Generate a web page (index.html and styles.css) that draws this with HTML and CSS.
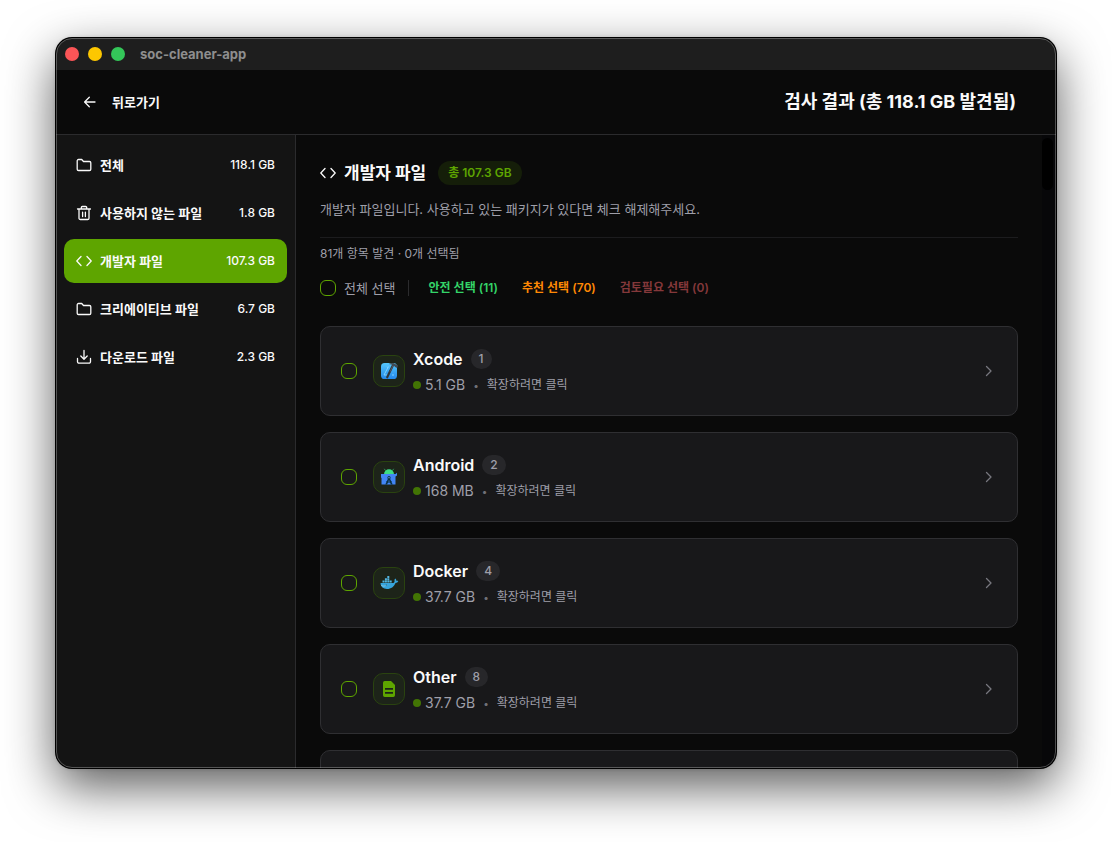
FILE: index.html
```html
<!DOCTYPE html>
<html lang="ko">
<head>
    <meta charset="UTF-8">
    <meta name="viewport" content="width=device-width, initial-scale=1.0">
    <title>soc-cleaner-app</title>
    <link rel="stylesheet" href="styles.css">
</head>
<body>

    <!-- Shared icons -->
    <svg class="sprite" aria-hidden="true">
        <symbol id="i-folder" viewBox="0 0 16 16">
            <path d="M1.2 3.8a1.3 1.3 0 0 1 1.3-1.3h3.2l1.8 2h6a1.3 1.3 0 0 1 1.3 1.3v6.4a1.3 1.3 0 0 1-1.3 1.3h-11a1.3 1.3 0 0 1-1.3-1.3z"/>
        </symbol>
        <symbol id="i-trash" viewBox="0 0 16 16">
            <path d="M1.5 4h13M3 4v9.2A1.3 1.3 0 0 0 4.3 14.5h7.4A1.3 1.3 0 0 0 13 13.2V4M5.3 4V2.6A1.1 1.1 0 0 1 6.4 1.5h3.2a1.1 1.1 0 0 1 1.1 1.1V4M6.6 7.2v4.3M9.4 7.2v4.3"/>
        </symbol>
        <symbol id="i-code" viewBox="0 0 16 16">
            <path d="M5 3.5L.8 8 5 12.5M11 3.5L15.2 8 11 12.5"/>
        </symbol>
        <symbol id="i-download" viewBox="0 0 16 16">
            <path d="M8 1.5V10M4.8 7L8 10.2 11.2 7M1.5 9.5v3.2A1.5 1.5 0 0 0 3 14.2h10a1.5 1.5 0 0 0 1.5-1.5V9.5"/>
        </symbol>
        <symbol id="i-chevron" viewBox="0 0 16 16">
            <path d="M5.5 3.5L10 8l-4.500 4.500"/>
        </symbol>
    </svg>

    <div class="window">
        <div class="titlebar">
            <span class="light red"></span>
            <span class="light yellow"></span>
            <span class="light green"></span>
            <span class="app-name">soc-cleaner-app</span>
        </div>

        <header class="header">
            <button class="back" type="button">
                <svg class="icon" viewBox="0 0 16 16"><path d="M13 8H2.8M7.3 3.3L2.6 8l4.7 4.7"/></svg>
                뒤로가기
            </button>
            <h1>검사 결과 (총 118.1 GB 발견됨)</h1>
        </header>

        <div class="body">
            <nav class="sidebar">
                <a class="nav-item" href="#all">
                    <svg class="icon"><use href="#i-folder"/></svg>
                    <span class="nav-label">전체</span>
                    <span class="nav-size">118.1 GB</span>
                </a>
                <a class="nav-item" href="#unused">
                    <svg class="icon"><use href="#i-trash"/></svg>
                    <span class="nav-label">사용하지 않는 파일</span>
                    <span class="nav-size">1.8 GB</span>
                </a>
                <a class="nav-item active" href="#developer">
                    <svg class="icon"><use href="#i-code"/></svg>
                    <span class="nav-label">개발자 파일</span>
                    <span class="nav-size">107.3 GB</span>
                </a>
                <a class="nav-item" href="#creative">
                    <svg class="icon"><use href="#i-folder"/></svg>
                    <span class="nav-label">크리에이티브 파일</span>
                    <span class="nav-size">6.7 GB</span>
                </a>
                <a class="nav-item" href="#downloads">
                    <svg class="icon"><use href="#i-download"/></svg>
                    <span class="nav-label">다운로드 파일</span>
                    <span class="nav-size">2.3 GB</span>
                </a>
            </nav>

            <main class="content">
                <div class="section-title">
                    <svg class="icon"><use href="#i-code"/></svg>
                    <h2>개발자 파일</h2>
                    <span class="total">총 107.3 GB</span>
                </div>
                <p class="description">개발자 파일입니다. 사용하고 있는 패키지가 있다면 체크 해제해주세요.</p>

                <div class="toolbar">
                    <p class="stats">81개 항목 발견 · 0개 선택됨</p>
                    <div class="filters">
                        <input class="check" type="checkbox" id="all">
                        <label for="all">전체 선택</label>
                        <span class="separator"></span>
                        <button class="filter safe" type="button">안전 선택 (11)</button>
                        <button class="filter recommended" type="button">추천 선택 (70)</button>
                        <button class="filter review" type="button" disabled>검토필요 선택 (0)</button>
                    </div>
                </div>

                <div class="cards">
                    <section class="card">
                        <input class="check" type="checkbox" id="xcode">
                        <div class="tile">
                            <svg viewBox="0 0 20 20">
                                <defs>
                                    <linearGradient id="sky" x1="0" y1="0" x2="0" y2="1">
                                        <stop offset="0" stop-color="#55c8fb"/>
                                        <stop offset="1" stop-color="#2487ea"/>
                                    </linearGradient>
                                </defs>
                                <rect x="2" y="2" width="16" height="16" rx="3.6" fill="url(#sky)"/>
                                <path d="M5 14L9.5 5.5M5 14h5M13 14h2M8 5.5l1 1.5" stroke="#7dd2ff" stroke-width="1" fill="none"/>
                                <path d="M14.3 3.6L8.2 16.3" stroke="#30363d" stroke-width="2.2" stroke-linecap="round"/>
                                <path d="M14.3 4L11 10.8" stroke="#6d767e" stroke-width=".6"/>
                                <path d="M9.7 2.9c2-1.5 4.7-1.3 6.8.3l2.6 1.3-1 2.4-2-1-1.3-1.4-2.6-1z" fill="#414a52"/>
                            </svg>
                        </div>
                        <div class="info">
                            <div class="name"><label for="xcode">Xcode</label><span class="count">1</span></div>
                            <div class="meta"><span class="dot"></span><span class="size">5.1 GB</span><span class="bullet">•</span><span class="hint">확장하려면 클릭</span></div>
                        </div>
                        <svg class="icon chevron"><use href="#i-chevron"/></svg>
                    </section>

                    <section class="card">
                        <input class="check" type="checkbox" id="android">
                        <div class="tile">
                            <svg viewBox="0 0 20 20">
                                <path d="M5 7.3a5 5 0 0 1 10 0z" fill="#3ddc84"/>
                                <path d="M6.5 3.6L5.3 1.8M13.5 3.6l1.2-1.8" stroke="#3ddc84" stroke-width=".6"/>
                                <path d="M2 7h14.5L18 5.8v2.6l-1.5 1.1v8h-14V11L2 10.5z" fill="#4285f4"/>
                                <path d="M10 9.5L6.3 17.5h1.8L10 13l1.9 4.5h1.8z" fill="#073042"/>
                                <circle cx="10" cy="10.7" r="1.6" fill="#073042"/>
                                <circle cx="10" cy="10.7" r=".6" fill="#9bbcff"/>
                                <path d="M7.5 14.5q2.5 1.4 5 0" stroke="#073042" fill="none"/>
                            </svg>
                        </div>
                        <div class="info">
                            <div class="name"><label for="android">Android</label><span class="count">2</span></div>
                            <div class="meta"><span class="dot"></span><span class="size">168 MB</span><span class="bullet">•</span><span class="hint">확장하려면 클릭</span></div>
                        </div>
                        <svg class="icon chevron"><use href="#i-chevron"/></svg>
                    </section>

                    <section class="card">
                        <input class="check" type="checkbox" id="docker">
                        <div class="tile">
                            <svg viewBox="0 0 20 20">
                                <path d="M1.5 10h12.7c1-.2 1.5-1 1.3-2.4-.1-.9.3-1.5.9-2 .7.6 1 1.3.9 2.1.8-.1 1.5 0 2 .3-.4 1.3-1.4 1.9-2.8 1.9-1.5 3.8-4.4 6-8.5 6-3.800 0-6.200-1.900-6.500-5.900z" fill="#37a4db"/>
                                <path d="M3.5 7.5h2v2h-2zM5.9 7.5h2v2h-2zM8.3 7.5h2v2h-2zM10.7 7.5h2v2h-2zM5.9 5.2h2v2h-2zM8.3 5.2h2v2h-2zM8.3 2.9h2v2h-2z" fill="#52b5df"/>
                                <path d="M2 12.5q3 1.5 6-.3" stroke="#a5d8ed" stroke-width=".6" fill="none"/>
                                <circle cx="7.3" cy="12" r=".6" fill="#153b4c"/>
                            </svg>
                        </div>
                        <div class="info">
                            <div class="name"><label for="docker">Docker</label><span class="count">4</span></div>
                            <div class="meta"><span class="dot"></span><span class="size">37.7 GB</span><span class="bullet">•</span><span class="hint">확장하려면 클릭</span></div>
                        </div>
                        <svg class="icon chevron"><use href="#i-chevron"/></svg>
                    </section>

                    <section class="card">
                        <input class="check" type="checkbox" id="other">
                        <div class="tile">
                            <svg viewBox="0 0 20 20">
                                <path fill-rule="evenodd" d="M5.7 2H12l4 4v10.3a1.7 1.7 0 0 1-1.7 1.7H5.7A1.7 1.7 0 0 1 4 16.3V3.7A1.7 1.7 0 0 1 5.7 2zM6 9v1.7h8V9zM6 13v1.7h8V13z" fill="#5ea500"/>
                            </svg>
                        </div>
                        <div class="info">
                            <div class="name"><label for="other">Other</label><span class="count">8</span></div>
                            <div class="meta"><span class="dot"></span><span class="size">37.7 GB</span><span class="bullet">•</span><span class="hint">확장하려면 클릭</span></div>
                        </div>
                        <svg class="icon chevron"><use href="#i-chevron"/></svg>
                    </section>

                    <section class="card"></section>
                </div>
            </main>

            <div class="scrollbar"><div class="thumb"></div></div>
        </div>
    </div>

</body>
</html>
```
FILE: styles.css
```css
* {
    box-sizing: border-box;
}

body {
    margin: 0;
    padding: 38px 56px 74px;
    height: 100vh;
    background: #ffffff;
    color: #fafafa;
    font-family: Inter, "Noto Sans CJK KR", sans-serif;
    font-size: 13px;
    line-height: 20px;
}

h1, h2, p {
    margin: 0;
}

button {
    border: 0;
    padding: 0;
    background: none;
    color: inherit;
    font: inherit;
    cursor: pointer;
}

.sprite {
    display: none;
}

.icon {
    flex: none;
    width: 16px;
    height: 16px;
    fill: none;
    stroke: currentColor;
    stroke-width: 1.3;
    stroke-linecap: round;
    stroke-linejoin: round;
}

/* WINDOW */
.window {
    position: relative;
    display: flex;
    flex-direction: column;
    height: 100%;
    border-radius: 16px;
    background: #0a0a0a;
    overflow: hidden;
    box-shadow: 0 0 0 1px #000000, 0 0 4px rgba(0, 0, 0, 0.2), 0 18px 50px rgba(0, 0, 0, 0.66);
}

/* thin light edge over the content */
.window::after {
    content: "";
    position: absolute;
    inset: 0;
    border: 1px solid rgba(255, 255, 255, 0.28);
    border-radius: 16px;
    pointer-events: none;
}

.titlebar {
    flex: none;
    display: flex;
    align-items: center;
    gap: 9px;
    height: 32px;
    padding: 0 9px;
    background: #1e1e1e;
}

.light {
    width: 14px;
    height: 14px;
    border-radius: 50%;
}

.red { background: #fb5557; }
.yellow { background: #fdc700; }
.green { background: #34c759; }

.app-name {
    margin-left: 6px;
    color: #8e8e8e;
    font-weight: 700;
}

/* HEADER */
.header {
    flex: none;
    display: flex;
    align-items: center;
    justify-content: space-between;
    height: 65px;
    padding: 0 40px 0 26px;
    border-bottom: 1px solid #2b2b2d;
}

.header h1 {
    font-size: 18px;
    font-weight: 700;
    line-height: 28px;
}

.back {
    display: flex;
    align-items: center;
    gap: 14px;
    font-weight: 600;
}

.body {
    flex: 1;
    display: flex;
    min-height: 0;
}

/* SIDEBAR */
.sidebar {
    flex: none;
    display: flex;
    flex-direction: column;
    gap: 4px;
    width: 240px;
    padding: 8px;
    border-right: 1px solid #2b2b2d;
    background: #141414;
}

.nav-item {
    display: flex;
    align-items: center;
    gap: 8px;
    height: 44px;
    padding: 0 12px;
    border-radius: 10px;
    color: #fafafa;
    font-weight: 600;
    text-decoration: none;
}

.nav-item.active {
    background: #5ea500;
}

.nav-label {
    flex: 1;
}

.nav-size {
    font-size: 12px;
    font-weight: 500;
}

/* CONTENT */
.content {
    flex: 1;
    min-width: 0;
    padding: 24px;
    overflow: hidden;
}

.section-title {
    display: flex;
    align-items: center;
    gap: 8px;
}

.section-title h2 {
    font-size: 17px;
    font-weight: 700;
    line-height: 28px;
}

.total {
    margin-left: 4px;
    padding: 0 10px;
    border-radius: 12px;
    background: #151e09;
    color: #5ea500;
    font-size: 12px;
    font-weight: 600;
    line-height: 24px;
}

.description {
    margin-top: 12px;
    padding-bottom: 18px;
    border-bottom: 1px solid #1c1c1e;
    color: #9f9fa9;
}

.toolbar {
    padding: 8px 0 28px;
    color: #9f9fa9;
}

.stats {
    font-size: 12px;
    line-height: 16px;
}

.filters {
    display: flex;
    align-items: center;
    margin-top: 16px;
}

.filters label {
    margin: 0 12px 0 8px;
}

.check {
    flex: none;
    appearance: none;
    width: 16px;
    height: 16px;
    margin: 0;
    border: 1px solid #5ea500;
    border-radius: 6px;
}

.separator {
    width: 1px;
    height: 16px;
    margin-right: 8px;
    background: #2b2b2d;
}

.filter {
    padding: 0 12px;
    font-size: 12px;
    font-weight: 600;
}

.safe { color: #34d468; }
.recommended { color: #ff8904; }
.review { color: #84383a; }

/* CARDS */
.cards {
    display: flex;
    flex-direction: column;
    gap: 16px;
}

.card {
    display: flex;
    align-items: center;
    min-height: 90px;
    padding: 20px;
    border: 1px solid #2f2f32;
    border-radius: 10px;
    background: #18181a;
}

.tile {
    flex: none;
    display: flex;
    align-items: center;
    justify-content: center;
    width: 32px;
    height: 32px;
    margin: 0 8px 0 16px;
    border: 1px solid #2a4310;
    border-radius: 10px;
    background: #1d2419;
}

.tile svg {
    width: 20px;
    height: 20px;
}

.info {
    flex: 1;
}

.name {
    display: flex;
    align-items: center;
    gap: 8px;
    font-size: 16px;
    font-weight: 600;
    line-height: 24px;
}

.count {
    padding: 0 8px;
    border-radius: 10px;
    background: #27272a;
    color: #9f9fa9;
    font-size: 12px;
    font-weight: 500;
    line-height: 20px;
}

.meta {
    display: flex;
    align-items: center;
    margin-top: 4px;
    color: #9f9fa9;
}

.size {
    font-size: 14px;
}

.dot {
    width: 8px;
    height: 8px;
    margin-right: 4px;
    border-radius: 50%;
    background: #427404;
}

.bullet {
    margin: 0 8px;
    color: #707078;
    font-size: 10px;
}

.hint {
    font-size: 12px;
}

.chevron {
    color: #77777e;
}

/* SCROLLBAR */
.scrollbar {
    flex: none;
    width: 14px;
    padding: 3px 3px 0 0;
    background: #070709;
}

.thumb {
    height: 52px;
    border-radius: 6px;
    background: #000000;
}
```
